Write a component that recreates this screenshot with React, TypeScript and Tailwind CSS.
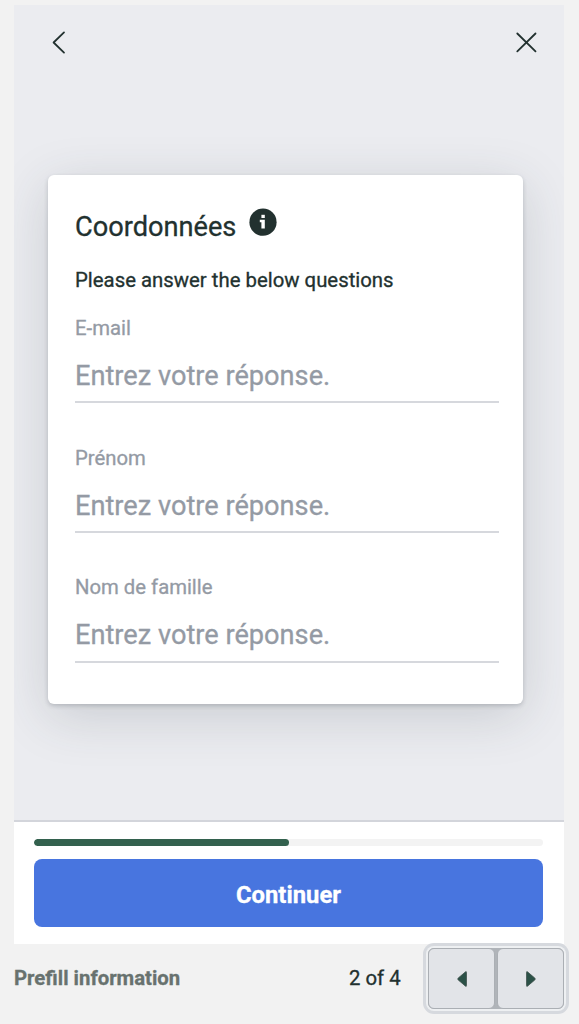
const fields = ["E-mail", "Prénom", "Nom de famille"];

function InfoIcon() {
  return (
    <svg width="28" height="28" viewBox="0 0 28 28" className="ml-[13px]" aria-hidden="true">
      <circle cx="14" cy="14.2" r="13.6" fill="#22312f" />
      <rect x="12.4" y="6.8" width="3.4" height="3.2" fill="#fff" />
      <path d="M10.8 11.8H15.8V20.4H12.4V14.2H10.8Z" fill="#fff" />
    </svg>
  );
}

function Field({ label }: { label: string }) {
  return (
    <div className="flex h-[129.7px] flex-col">
      <span className="h-[29.4px] text-[20.3px] leading-[30px] text-[#949aa4]">{label}</span>
      <div className="flex h-[61px] w-[424px] items-center border-b-2 border-[#d6d8dd] pt-[9px] text-[27.2px] text-[#949aa4]">
        <span className="whitespace-nowrap">Entrez votre réponse.</span>
      </div>
    </div>
  );
}

function PagerButton({ next = false }: { next?: boolean }) {
  return (
    <button
      aria-label={next ? "Next" : "Previous"}
      className="flex h-[61px] w-[67px] items-center justify-center rounded-[6px] border border-[#abafb4] bg-[#e2e4e8]"
    >
      <svg width="12" height="18" viewBox="0 0 12 18" className="shrink-0" aria-hidden="true">
        <path
          d={next ? "M1.5 2.4Q1.5 1 2.8 2.1L9.8 8.1Q10.8 9 9.8 9.9L2.8 15.9Q1.5 17 1.5 15.6Z" : "M10.5 2.4Q10.5 1 9.2 2.1L2.2 8.1Q1.2 9 2.2 9.9L9.2 15.9Q10.5 17 10.5 15.6Z"}
          fill="#2b5147"
          stroke="#43544f"
          strokeWidth=".8"
        />
      </svg>
    </button>
  );
}

export default function App() {
  return (
    <div className="flex h-[1024px] w-[579px] flex-col overflow-hidden bg-[#f2f2f2] pt-[5px] font-['Roboto',sans-serif] text-[#22312f] [-webkit-text-stroke:0.3px_currentColor]">
      <div className="ml-[14px] flex h-[939px] w-[550px] flex-col bg-white">
        <main className="h-[817px] overflow-hidden border-b-2 border-[#d3d5db] bg-[#ebecf0] pl-[34px]">
          <header className="flex h-[170px] items-start justify-between pt-[26px] pr-[27px]">
            <svg width="22" height="24" viewBox="0 0 22 24" fill="none" stroke="#22312f" strokeWidth="1.8" strokeLinecap="round" strokeLinejoin="round">
              <path d="M16 1.4L5.6 11.5L16 21.6" />
            </svg>
            <svg width="22" height="24" viewBox="0 0 22 24" fill="none" stroke="#22312f" strokeWidth="1.8" strokeLinecap="round">
              <path d="M2.3 2.5L20.5 20.3M20.5 2.5L2.3 20.3" />
            </svg>
          </header>
          <section className="h-[529px] w-[475px] rounded-[6px] bg-white pt-[33px] pl-[27px] shadow-[0_2px_4px_rgba(50,60,70,0.22),0_12px_52px_rgba(50,60,70,0.18)]">
            <div className="flex h-[52px] items-start">
              <h1 className="text-[27.2px] leading-[38px]">Coordonnées</h1>
              <InfoIcon />
            </div>
            <p className="h-[53px] text-[20.35px] leading-[40px]">Please answer the below questions</p>
            <div className="flex flex-col">
              {fields.map((label) => (
                <Field key={label} label={label} />
              ))}
            </div>
          </section>
        </main>
        <footer className="pr-[21px] pl-5 pt-[17px]">
          <div className="h-[7px] overflow-hidden rounded-full bg-[#f3f3f3]">
            <div className="h-full w-1/2 rounded-full bg-[#33614e]" />
          </div>
          <button className="mt-[13px] flex h-[68px] w-full items-center justify-center rounded-[8px] bg-[#4875df] pt-[5px] text-[23.8px] font-bold text-white">
            Continuer
          </button>
        </footer>
      </div>
      <div className="flex h-[80px] items-start pl-[14px] text-[20.35px]">
        <strong className="w-[335px] pt-[19px] leading-[30px] font-bold text-[#68726f]">Prefill information</strong>
        <span className="w-[79px] pt-[19px] leading-[30px]">2 of 4</span>
        <div className="mt-[4px] flex gap-[2px] rounded-[6px] bg-[#b0b4b9] shadow-[0_0_0_2px_#eef0f2,0_0_0_5px_#d6d9de]">
          <PagerButton />
          <PagerButton next />
        </div>
      </div>
    </div>
  );
}
